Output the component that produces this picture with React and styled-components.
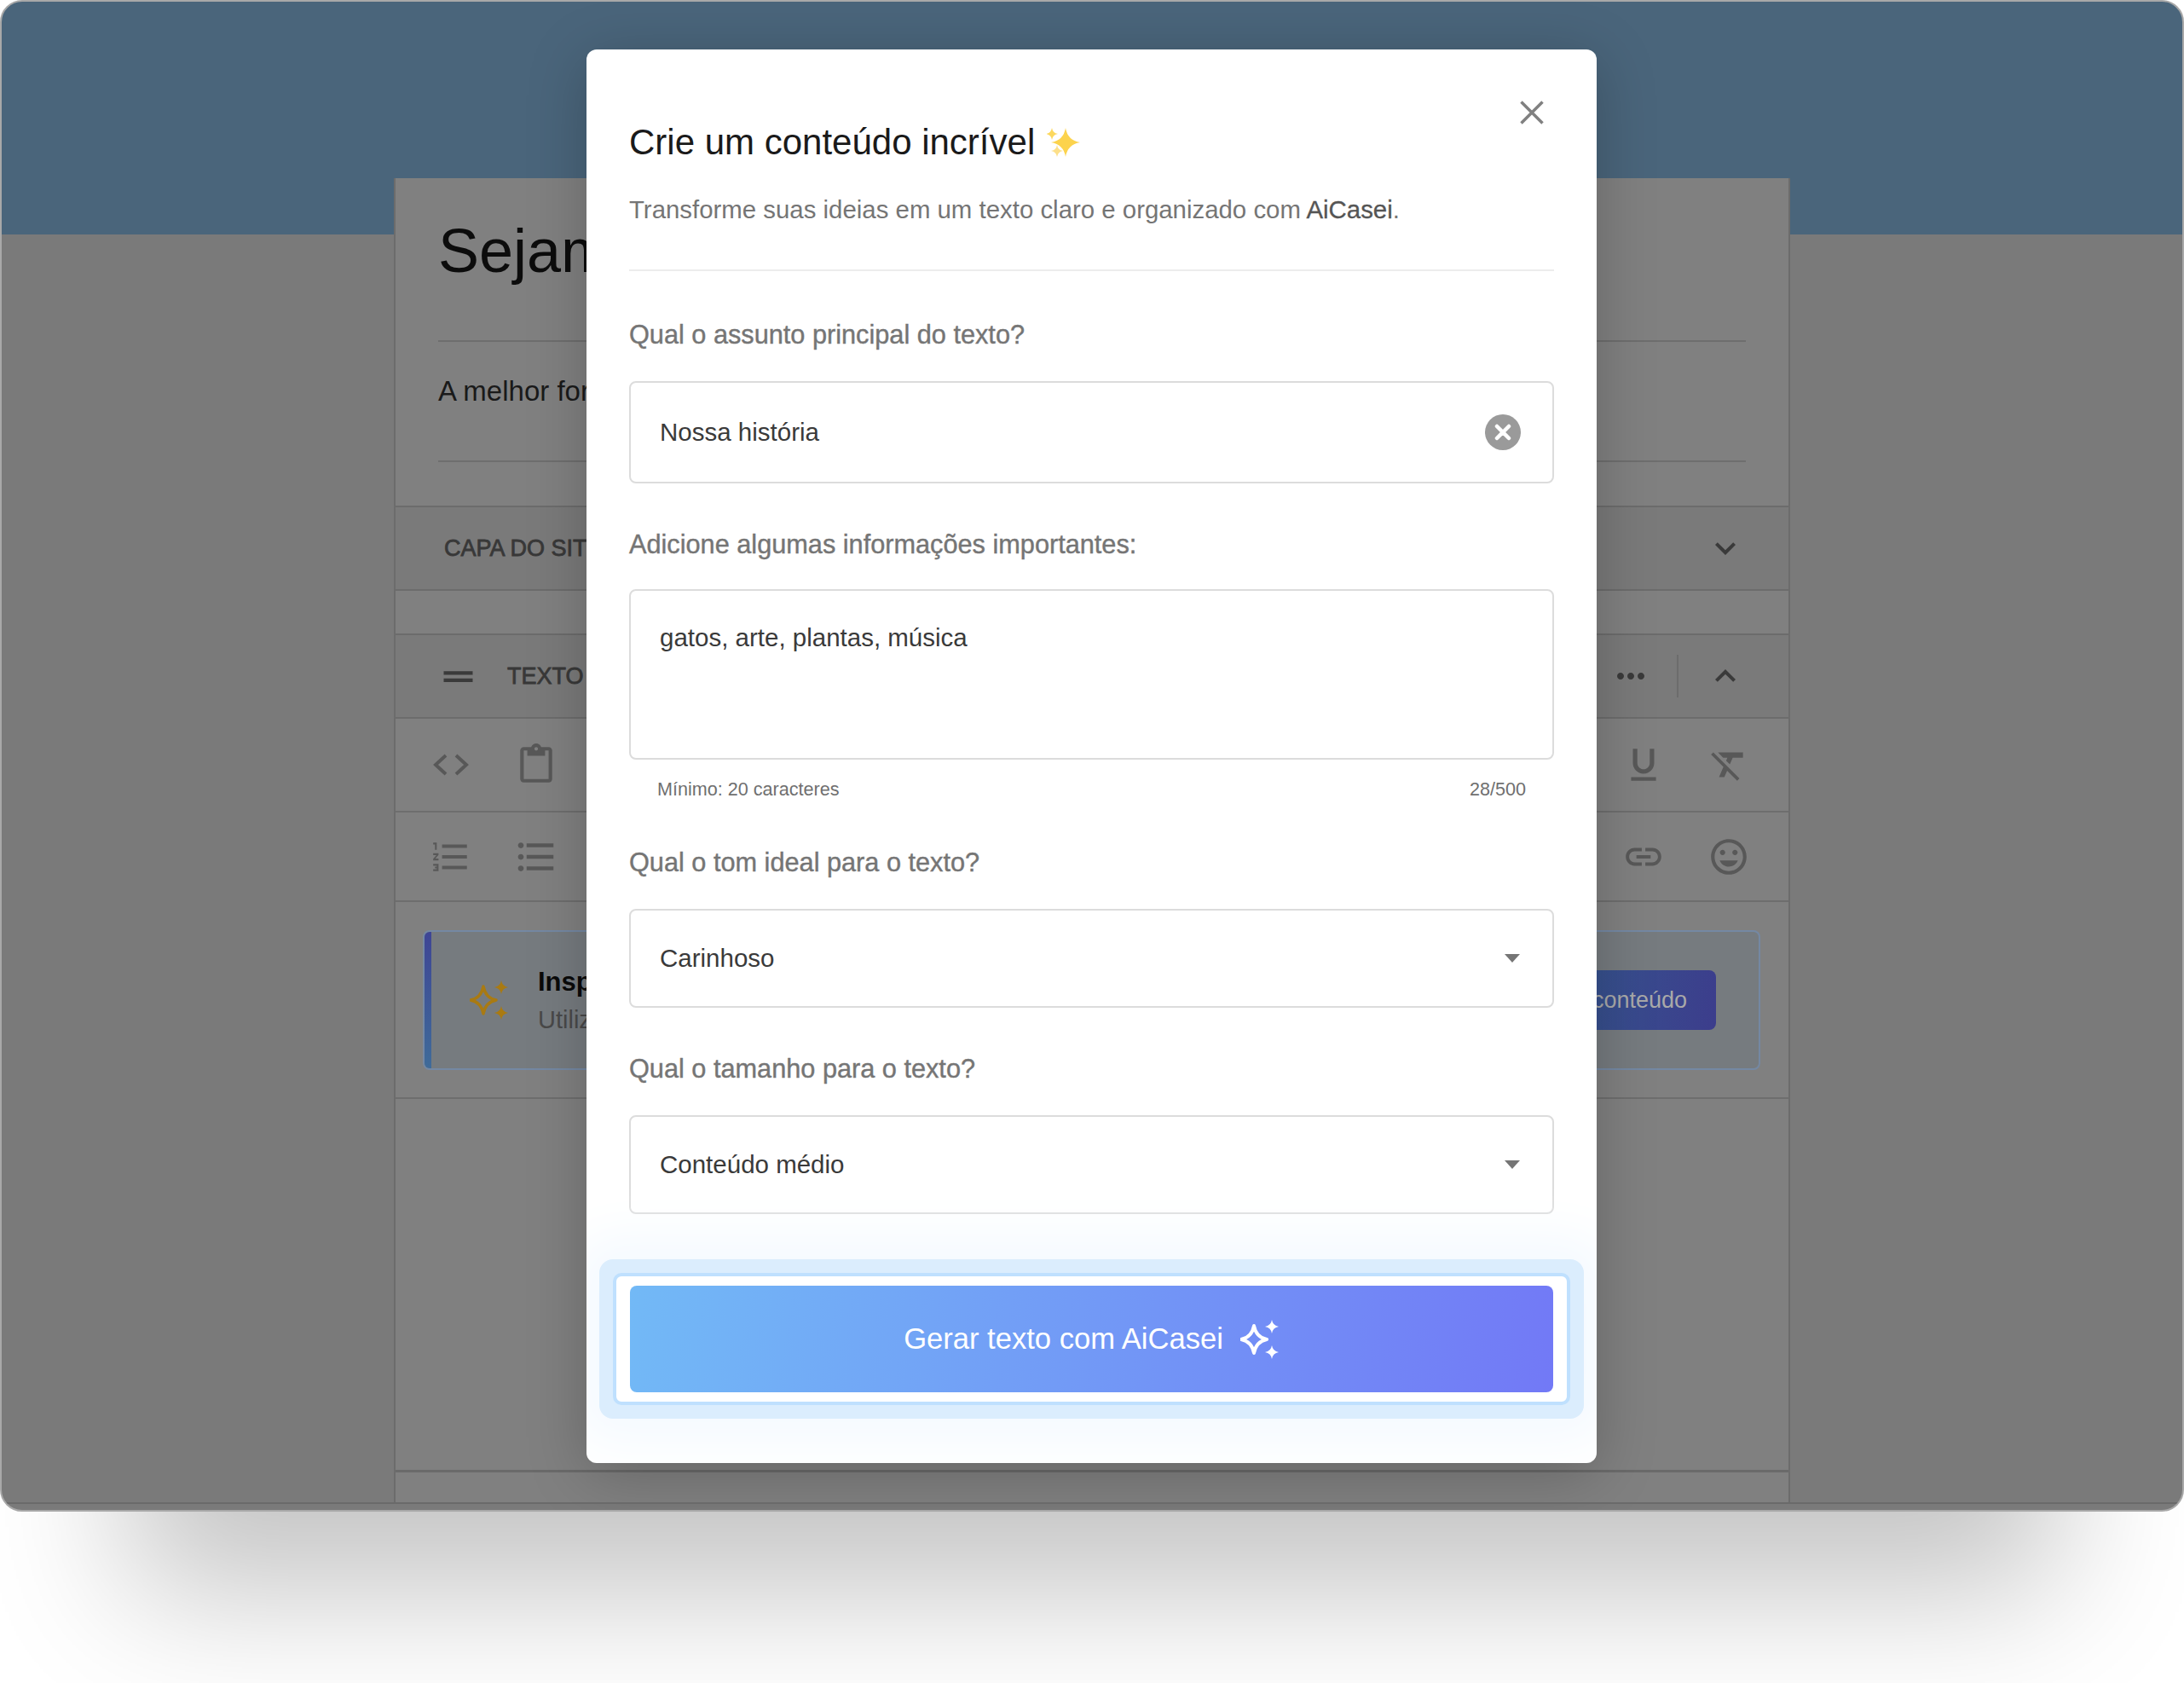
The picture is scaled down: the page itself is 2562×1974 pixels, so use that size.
import styled, { createGlobalStyle } from "styled-components";
import {
  MdContentPaste,
  MdDragHandle,
  MdFormatClear,
  MdFormatListBulleted,
  MdFormatListNumbered,
  MdFormatUnderlined,
  MdInsertEmoticon,
  MdKeyboardArrowDown,
  MdKeyboardArrowUp,
  MdLink,
  MdMoreHoriz,
} from "react-icons/md";

const GlobalStyle = createGlobalStyle`
  html, body {
    margin: 0;
    height: 1974px;
    background: #fff;
    overflow: hidden;
  }
  * {
    box-sizing: border-box;
  }
  body {
    font-family: "Liberation Sans", Arial, sans-serif;
  }
`;

// Dimmed page behind the modal
const Window = styled.div`
  position: relative;
  height: 1773px;
  padding: 207px 460px 0;
  border: 2px solid #a8a8a8;
  border-radius: 26px;
  background: linear-gradient(#4a657b 0 273px, #7a7a7a 273px);
  box-shadow: 0 245px 155px -150px rgba(0, 0, 0, 0.23);
  display: flex;
  flex-direction: column;
  overflow: hidden;

  &::after {
    content: "";
    position: absolute;
    left: 0;
    right: 0;
    bottom: 7px;
    height: 2px;
    background: #6a6a6a;
  }
`;

const Panel = styled.div`
  flex: 1;
  display: flex;
  flex-direction: column;
  margin-bottom: 9px;
  background: #808080;
  border-left: 2px solid #6c6c6c;
  border-right: 2px solid #6c6c6c;
`;

const Intro = styled.div`
  padding: 0 50px;
  height: 384px;
  flex-shrink: 0;
`;

const PageTitle = styled.div`
  height: 192px;
  padding-top: 43px;
  font-size: 72px;
  line-height: 84px;
  color: #0c0c0c;
  border-bottom: 2px solid #6e6e6e;
  white-space: nowrap;
`;

const PageSubtitle = styled.div`
  height: 141px;
  padding-top: 39px;
  font-size: 33px;
  line-height: 38px;
  color: #1a1a1a;
  border-bottom: 2px solid #6e6e6e;
  white-space: nowrap;
`;

const SectionBar = styled.div`
  display: flex;
  align-items: center;
  justify-content: space-between;
  flex-shrink: 0;
  height: ${(p) => p.$height}px;
  margin-bottom: ${(p) => p.$gap || 0}px;
  padding: 0 50px 0 ${(p) => p.$left}px;
  background: #7a7a7a;
  border-top: 2px solid #6c6c6c;
  border-bottom: 2px solid #6c6c6c;
  color: #383838;
  font-size: 27px;
  -webkit-text-stroke: 0.8px #383838;
  white-space: nowrap;
`;

const BarStart = styled.div`
  display: flex;
  align-items: center;
  gap: 32px;
`;

const BarEnd = styled.div`
  display: flex;
  align-items: center;
  color: #3a3a3a;
  font-size: 48px;
`;

const BarDivider = styled.span`
  width: 2px;
  height: 50px;
  margin: 0 31px 0 30px;
  background: #6c6c6c;
`;

const ToolRow = styled.div`
  display: flex;
  align-items: center;
  justify-content: space-between;
  flex-shrink: 0;
  height: ${(p) => p.$height}px;
  padding: 0 20px 0 15px;
  border-bottom: 2px solid #6e6e6e;
  color: #585858;
  font-size: 50px;
`;

const ToolGroup = styled.div`
  display: flex;
  align-items: center;
`;

const ToolButton = styled.span`
  width: 100px;
  display: flex;
  align-items: center;
  justify-content: center;
`;

const PromoArea = styled.div`
  flex-shrink: 0;
  padding: 33px 33px 32px 32px;
  border-bottom: 2px solid #6e6e6e;
`;

const PromoCard = styled.div`
  position: relative;
  display: flex;
  align-items: center;
  justify-content: space-between;
  height: 164px;
  padding: 0 50px 0 53px;
  background: #767b7f;
  border: 2px solid #7488a3;
  border-radius: 8px;
  overflow: hidden;

  &::before {
    content: "";
    position: absolute;
    left: 0;
    top: 0;
    bottom: 0;
    width: 8px;
    background: linear-gradient(#3e4595, #3f6b99);
  }
`;

const PromoText = styled.div`
  display: flex;
  flex-direction: column;
  gap: 8px;
  margin-left: 34px;
  flex: 1;
  white-space: nowrap;
`;

const PromoTitle = styled.div`
  font-size: 31px;
  font-weight: 700;
  line-height: 38px;
  color: #0a0a0a;
`;

const PromoSub = styled.div`
  font-size: 29px;
  line-height: 34px;
  color: #494949;
`;

const PromoButton = styled.div`
  display: flex;
  align-items: center;
  height: 70px;
  padding: 0 34px;
  border-radius: 8px;
  background: linear-gradient(100deg, #33608f, #3c3d8c);
  color: #a9a9a9;
  font-size: 27px;
  white-space: nowrap;
`;

const PanelFoot = styled.div`
  margin-top: auto;
  height: 38px;
  flex-shrink: 0;
  border-top: 3px solid #6a6a6a;
`;

// Modal
const Modal = styled.div`
  position: absolute;
  left: 686px;
  top: 56px;
  width: 1185px;
  height: 1658px;
  padding: 0 50px;
  display: flex;
  flex-direction: column;
  background: #fff;
  border-radius: 12px;
  box-shadow: 0 12px 70px rgba(0, 0, 0, 0.22);
  overflow: hidden;
`;

const CloseButton = styled.svg`
  position: absolute;
  right: 62px;
  top: 60px;
  width: 28px;
  height: 28px;
`;

const ModalHead = styled.header`
  padding-top: 85px;
  height: 260px;
  border-bottom: 2px solid #ececec;
  flex-shrink: 0;
`;

const ModalTitle = styled.h2`
  display: flex;
  align-items: center;
  gap: 14px;
  margin: 0;
  font-size: 42px;
  line-height: 48px;
  font-weight: 400;
  color: #1a1a1a;
`;

const ModalSubtitle = styled.p`
  margin: 37px 0 0;
  font-size: 29.4px;
  line-height: 36px;
  color: #757575;

  & strong {
    font-weight: 400;
    color: #555;
    -webkit-text-stroke: 0.3px #555;
  }
`;

const Field = styled.div`
  flex-shrink: 0;
  padding-top: ${(p) => p.$top}px;
`;

const FieldLabel = styled.label`
  display: block;
  margin-bottom: ${(p) => p.$gap}px;
  font-size: 30.7px;
  line-height: 36px;
  color: #757575;
  -webkit-text-stroke: 0.4px #757575;
`;

const Control = styled.div`
  display: flex;
  align-items: ${(p) => (p.$multiline ? "flex-start" : "center")};
  justify-content: space-between;
  height: ${(p) => p.$height}px;
  padding: ${(p) => (p.$multiline ? "37px" : "0")} 34px 0;
  border: 2px solid #dcdcdc;
  border-radius: 8px;
  font-size: 29.5px;
  line-height: 36px;
  color: #3a3a3a;
`;

const ClearIcon = styled.svg`
  width: 42px;
  height: 42px;
  margin-right: 3px;
`;

const Caret = styled.span`
  width: 0;
  height: 0;
  margin-right: 4px;
  border-left: 9px solid transparent;
  border-right: 9px solid transparent;
  border-top: 10px solid #757575;
`;

const HelperRow = styled.div`
  display: flex;
  justify-content: space-between;
  padding: 22px 33px 0;
  font-size: 21.6px;
  line-height: 26px;
  color: #6f6f6f;
`;

const Halo = styled.div`
  flex-shrink: 0;
  margin: 53px -35px 0;
  padding: 16px;
  background: #dbedfd;
  border-radius: 16px;
  box-shadow: 0 0 60px 30px #f5faff;
`;

const Ring = styled.div`
  padding: 11px 16px;
  background: #fff;
  border: 4px solid #bfe0fe;
  border-radius: 10px;
`;

const GenerateButton = styled.button`
  display: flex;
  align-items: center;
  justify-content: center;
  gap: 20px;
  width: 100%;
  height: 125px;
  border: 0;
  border-radius: 8px;
  background: linear-gradient(100deg, #72b9f6, #7279f6);
  color: #fff;
  font-family: inherit;
  font-size: 34.6px;
  padding: 0;
`;

const star = (cx, cy, r) =>
  `M${cx} ${cy - r}Q${cx + r * 0.14} ${cy - r * 0.14} ${cx + r} ${cy}Q${cx + r * 0.14} ${cy + r * 0.14} ${cx} ${cy + r}Q${cx - r * 0.14} ${cy + r * 0.14} ${cx - r} ${cy}Q${cx - r * 0.14} ${cy - r * 0.14} ${cx} ${cy - r}Z`;

const TitleSparkles = () => (
  <svg width="40" height="38" viewBox="0 0 40 38">
    <path d={star(22, 19, 17)} fill="#fcd34d" />
    <path d={star(6, 9, 7)} fill="#fcd85e" />
    <path d={star(12, 29, 7)} fill="#fde08a" />
  </svg>
);

const AiStars = ({ color, outline }) => (
  <svg width="46" height="48" viewBox="0 0 46 48">
    <path
      d="M16 8Q18.5 21.5 31 24Q18.5 26.5 16 40Q13.5 26.5 1 24Q13.5 21.5 16 8Z"
      fill="none"
      stroke={color}
      strokeWidth={outline}
      strokeLinejoin="round"
    />
    <path d={star(37, 9, 8)} fill={color} />
    <path d={star(37, 39, 8)} fill={color} />
  </svg>
);

export default function App() {
  return (
    <>
      <GlobalStyle />
      <Window>
        <Panel>
          <Intro>
            <PageTitle>Sejam bem-vindos</PageTitle>
            <PageSubtitle>A melhor forma de contar a nossa história</PageSubtitle>
          </Intro>
          <SectionBar $height={100} $left={57} $gap={50}>
            <span>CAPA DO SITE</span>
            <BarEnd>
              <MdKeyboardArrowDown />
            </BarEnd>
          </SectionBar>
          <SectionBar $height={100} $left={48}>
            <BarStart>
              <MdDragHandle size={51} color="#3a3a3a" />
              <span>TEXTO</span>
            </BarStart>
            <BarEnd>
              <MdMoreHoriz />
              <BarDivider />
              <MdKeyboardArrowUp />
            </BarEnd>
          </SectionBar>
          <ToolRow $height={110}>
            <ToolGroup>
              <ToolButton>
                <svg width="42" height="26" viewBox="0 0 42 26" fill="none" stroke="#585858" strokeWidth="4">
                  <path d="M15 2 3 13l12 11M27 2l12 11-12 11" />
                </svg>
              </ToolButton>
              <ToolButton>
                <MdContentPaste />
              </ToolButton>
            </ToolGroup>
            <ToolGroup>
              <ToolButton>
                <MdFormatUnderlined />
              </ToolButton>
              <ToolButton>
                <MdFormatClear />
              </ToolButton>
            </ToolGroup>
          </ToolRow>
          <ToolRow $height={105}>
            <ToolGroup>
              <ToolButton>
                <MdFormatListNumbered />
              </ToolButton>
              <ToolButton>
                <MdFormatListBulleted size={54} />
              </ToolButton>
            </ToolGroup>
            <ToolGroup>
              <ToolButton>
                <MdLink />
              </ToolButton>
              <ToolButton>
                <MdInsertEmoticon />
              </ToolButton>
            </ToolGroup>
          </ToolRow>
          <PromoArea>
            <PromoCard>
              <AiStars color="#a97a12" outline={3.5} />
              <PromoText>
                <PromoTitle>Inspire-se com a AiCasei</PromoTitle>
                <PromoSub>Utilize a inteligência artificial</PromoSub>
              </PromoText>
              <PromoButton>Gerar conteúdo</PromoButton>
            </PromoCard>
          </PromoArea>
          <PanelFoot />
        </Panel>
        <Modal>
          <CloseButton viewBox="0 0 28 28" fill="none" stroke="#808080" strokeWidth="3.5">
            <path d="M1.5 1.5l25 25M26.5 1.5l-25 25" />
          </CloseButton>
          <ModalHead>
            <ModalTitle>
              Crie um conteúdo incrível <TitleSparkles />
            </ModalTitle>
            <ModalSubtitle>
              Transforme suas ideias em um texto claro e organizado com <strong>AiCasei</strong>.
            </ModalSubtitle>
          </ModalHead>
          <Field $top={57}>
            <FieldLabel $gap={36}>Qual o assunto principal do texto?</FieldLabel>
            <Control $height={120}>
              Nossa história
              <ClearIcon viewBox="0 0 42 42">
                <circle cx="21" cy="21" r="21" fill="#9a9a9a" />
                <path d="M14 14l14 14M28 14L14 28" stroke="#fff" strokeWidth="4.5" strokeLinecap="round" />
              </ClearIcon>
            </Control>
          </Field>
          <Field $top={54}>
            <FieldLabel $gap={34}>Adicione algumas informações importantes:</FieldLabel>
            <Control $height={200} $multiline>
              gatos, arte, plantas, música
            </Control>
            <HelperRow>
              <span>Mínimo: 20 caracteres</span>
              <span>28/500</span>
            </HelperRow>
          </Field>
          <Field $top={55}>
            <FieldLabel $gap={36}>Qual o tom ideal para o texto?</FieldLabel>
            <Control $height={116}>
              Carinhoso
              <Caret />
            </Control>
          </Field>
          <Field $top={54}>
            <FieldLabel $gap={36}>Qual o tamanho para o texto?</FieldLabel>
            <Control $height={116}>
              Conteúdo médio
              <Caret />
            </Control>
          </Field>
          <Halo>
            <Ring>
              <GenerateButton>
                Gerar texto com AiCasei
                <AiStars color="#fff" outline={4} />
              </GenerateButton>
            </Ring>
          </Halo>
        </Modal>
      </Window>
    </>
  );
}
